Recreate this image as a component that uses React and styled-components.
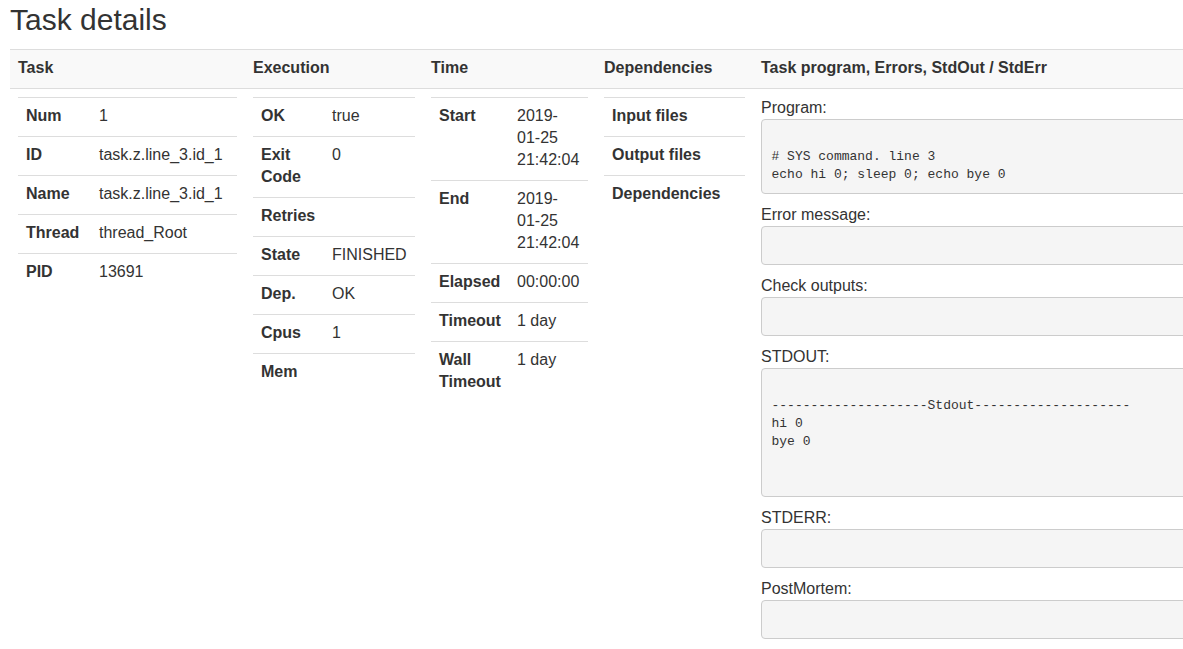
import styled, { createGlobalStyle } from 'styled-components';

const GlobalStyle = createGlobalStyle`
  html, body {
    margin: 0;
    padding: 0;
    background: #fff;
    overflow: hidden;
  }

  body {
    font-family: 'Liberation Sans', Arial, sans-serif;
    font-size: 16px;
    line-height: 22px;
    color: #333;
  }
`;

const taskRows = [
  ['Num', '1'],
  ['ID', 'task.z.line_3.id_1'],
  ['Name', 'task.z.line_3.id_1'],
  ['Thread', 'thread_Root'],
  ['PID', '13691'],
];

const executionRows = [
  ['OK', 'true'],
  ['Exit Code', '0'],
  ['Retries', ''],
  ['State', 'FINISHED'],
  ['Dep.', 'OK'],
  ['Cpus', '1'],
  ['Mem', ''],
];

const timeRows = [
  ['Start', '2019-01-25 21:42:04'],
  ['End', '2019-01-25 21:42:04'],
  ['Elapsed', '00:00:00'],
  ['Timeout', '1 day'],
  ['Wall Timeout', '1 day'],
];

const dependencyRows = ['Input files', 'Output files', 'Dependencies'];

const dashes = '-'.repeat(20);

const outputs = [
  { label: 'Program:', lines: ['', '# SYS command. line 3', 'echo hi 0; sleep 0; echo bye 0'] },
  { label: 'Error message:', lines: [' '] },
  { label: 'Check outputs:', lines: [' '] },
  { label: 'STDOUT:', lines: ['', `${dashes}Stdout${dashes}`, 'hi 0', 'bye 0', '', ' '] },
  { label: 'STDERR:', lines: [' '] },
  { label: 'PostMortem:', lines: [' '] },
];

function InfoTable({ rows, keyWidth }) {
  return (
    <InnerTable>
      <colgroup>
        <col style={{ width: keyWidth }} />
        <col />
      </colgroup>
      <tbody>
        {rows.map(([key, value]) => (
          <tr key={key}>
            <KeyCell>{key}</KeyCell>
            <ValueCell>{value}</ValueCell>
          </tr>
        ))}
      </tbody>
    </InnerTable>
  );
}

function App() {
  return (
    <Page>
      <GlobalStyle />
      <Title>Task details</Title>
      <DetailsTable>
        <colgroup>
          <col style={{ width: 235 }} />
          <col style={{ width: 178 }} />
          <col style={{ width: 173 }} />
          <col style={{ width: 157 }} />
          <col />
        </colgroup>
        <thead>
          <tr>
            <HeadCell>Task</HeadCell>
            <HeadCell>Execution</HeadCell>
            <HeadCell>Time</HeadCell>
            <HeadCell>Dependencies</HeadCell>
            <HeadCell>Task program, Errors, StdOut / StdErr</HeadCell>
          </tr>
        </thead>
        <tbody>
          <tr>
            <BodyCell>
              <InfoTable rows={taskRows} keyWidth={73} />
            </BodyCell>
            <BodyCell>
              <InfoTable rows={executionRows} keyWidth={71} />
            </BodyCell>
            <BodyCell>
              <InfoTable rows={timeRows} keyWidth={78} />
            </BodyCell>
            <BodyCell>
              <InnerTable>
                <tbody>
                  {dependencyRows.map((name) => (
                    <tr key={name}>
                      <KeyCell>{name}</KeyCell>
                    </tr>
                  ))}
                </tbody>
              </InnerTable>
            </BodyCell>
            <BodyCell>
              {outputs.map((item) => (
                <div key={item.label}>
                  <OutputLabel>{item.label}</OutputLabel>
                  <OutputBox>{item.lines.join('\n')}</OutputBox>
                </div>
              ))}
            </BodyCell>
          </tr>
        </tbody>
      </DetailsTable>
    </Page>
  );
}

const Page = styled.div`
  padding: 0 10px;
  width: 1400px;
`;

const Title = styled.h2`
  font-family: 'Liberation Sans', Arial, sans-serif;
  font-size: 30px;
  font-weight: 500;
  line-height: 33px;
  margin: 3px 0 13px;
  color: #333;
`;

const DetailsTable = styled.table`
  width: 1380px;
  table-layout: fixed;
  border-collapse: collapse;
  border-spacing: 0;
`;

const HeadCell = styled.th`
  text-align: left;
  font-weight: bold;
  padding: 7px 8px 9px;
  background-color: #f9f9f9;
  border-top: 1px solid #ddd;
  border-bottom: 1px solid #ddd;
  vertical-align: bottom;
`;

const BodyCell = styled.td`
  padding: 8px;
  vertical-align: top;
`;

const InnerTable = styled.table`
  width: 100%;
  table-layout: fixed;
  border-collapse: collapse;
  border-spacing: 0;
`;

const KeyCell = styled.th`
  text-align: left;
  font-weight: bold;
  padding: 7px 8px 9px;
  border-top: 1px solid #ddd;
  vertical-align: top;
  white-space: normal;
`;

const ValueCell = styled.td`
  padding: 7px 8px 9px;
  border-top: 1px solid #ddd;
  vertical-align: top;
`;

const OutputLabel = styled.div`
  font-size: 16px;
  line-height: 22px;
`;

const OutputBox = styled.pre`
  margin: 0 0 10px;
  padding: 9.5px;
  font-family: 'Liberation Mono', 'Courier New', monospace;
  font-size: 13px;
  line-height: 18px;
  color: #333;
  background-color: #f5f5f5;
  border: 1px solid #ccc;
  border-radius: 4px;
  white-space: pre;
  overflow: hidden;
`;

export default App;
